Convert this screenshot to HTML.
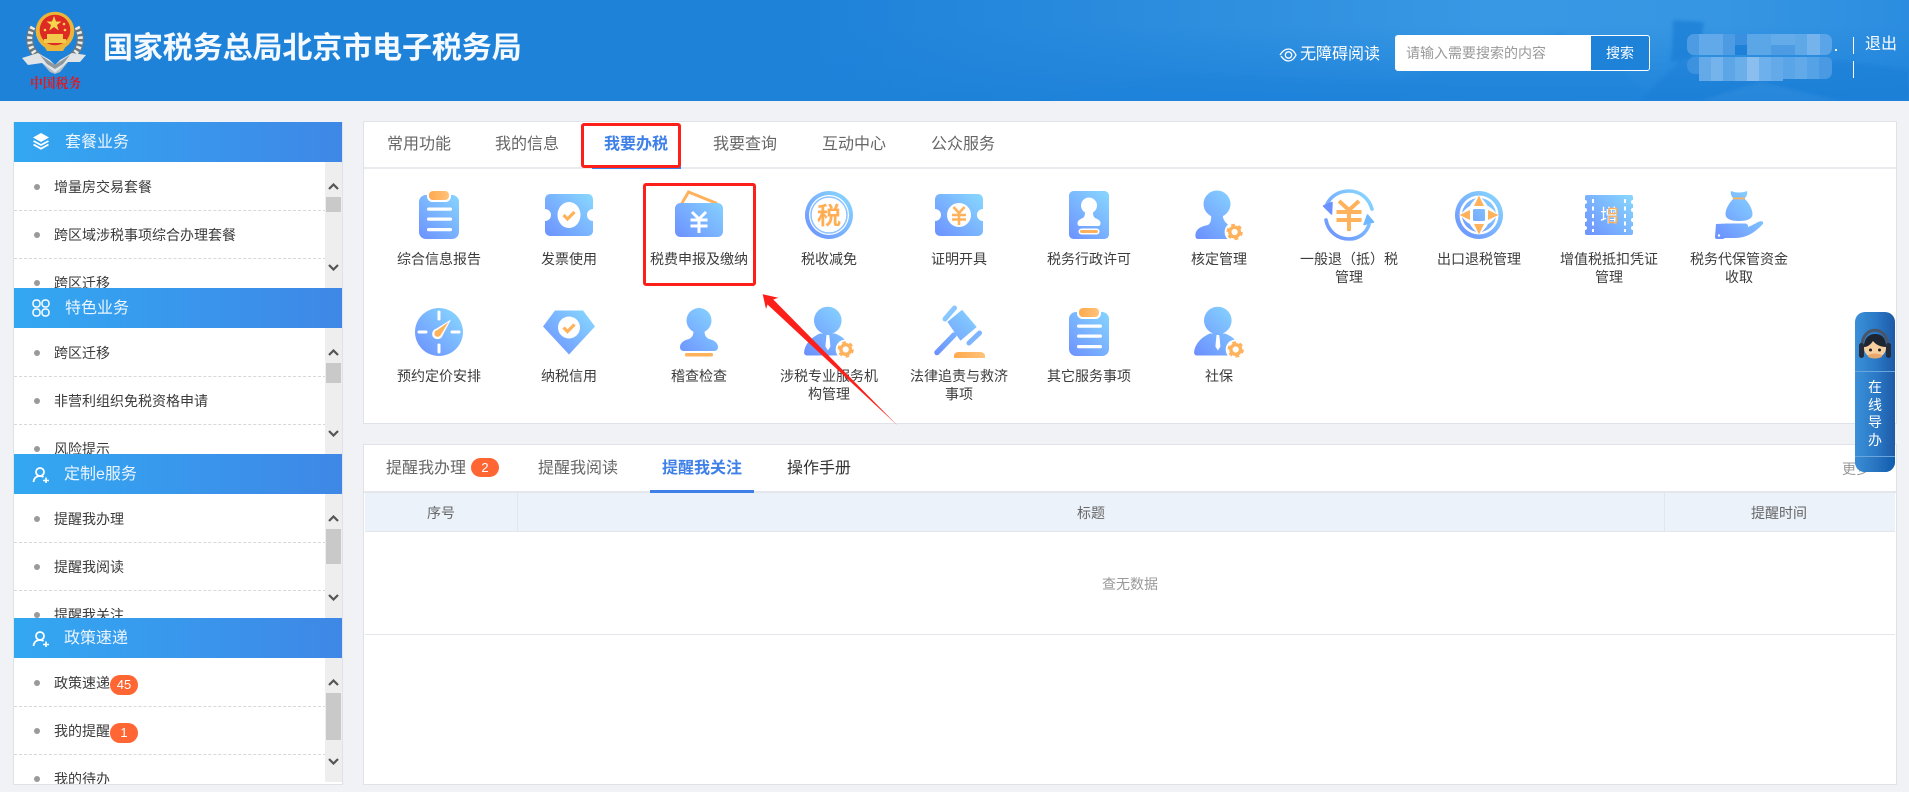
<!DOCTYPE html>
<html lang="zh-CN">
<head>
<meta charset="utf-8">
<title>国家税务总局北京市电子税务局</title>
<style>
*{box-sizing:border-box;margin:0;padding:0}
html,body{width:1909px;height:792px;overflow:hidden;background:#f0f2f5;font-family:"Liberation Sans","Noto Sans CJK SC",sans-serif;color:#333}
.a{position:absolute}
#hd{left:0;top:0;width:1909px;height:101px;background:linear-gradient(180deg,rgba(30,130,217,0) 25%,rgba(30,130,217,.95) 100%),linear-gradient(90deg,#1e82d9 0,#1e82d9 42%,#2a8bdd 58%,#3898e4 78%,#3696e3 90%,#2c8de0 100%);overflow:hidden}
.t{position:absolute;white-space:nowrap}
.sec{position:absolute;left:13px;width:330px;background:#fff;overflow:hidden;border-left:1px solid #dfe2e6;border-right:1px solid #dfe2e6}
.sh{position:absolute;left:0;top:0;width:328px;height:40px;background:linear-gradient(90deg,#33a8f2,#3e87e6);color:#eaf5ff;font-size:16px;line-height:41px}
.sh span{position:absolute;left:51px}
.sh svg{position:absolute;left:18px;top:11px}
.line{position:absolute;left:0;width:312px;border-top:1px dashed #d8d8d8}
.it{position:absolute;left:40px;font-size:14px;line-height:20px;color:#3a3a3a;white-space:nowrap}
.dot{position:absolute;left:20px;width:6px;height:6px;border-radius:50%;background:#9a9a9a}
.sb{position:absolute;left:311px;top:40px;width:17px;background:#eee}
.th{position:absolute;left:1px;width:15px;background:#c9c9c9}
.sb svg{position:absolute;left:3px}
.bd{position:absolute;height:20px;width:28px;border-radius:10px;background:#ff6633;color:#fff;font-size:13px;line-height:20px;text-align:center}
.pn{position:absolute;background:#fff;border:1px solid #dfe2e6}
.tb{position:absolute;font-size:16px;line-height:22px;color:#666;white-space:nowrap}
.ic{position:absolute;width:60px;height:60px;overflow:visible}
.lb{position:absolute;width:100px;font-size:14px;line-height:18px;text-align:center;color:#3c3c3c}
.rb{position:absolute;border:3px solid #fc1f1a;border-radius:3px}
</style>
</head>
<body>
<svg width="0" height="0" style="position:absolute">
<defs>
<linearGradient id="g" gradientUnits="userSpaceOnUse" x1="8" y1="54" x2="52" y2="8"><stop offset="0" stop-color="#6c90ff"/><stop offset="1" stop-color="#88d8ff"/></linearGradient>
<linearGradient id="o" x1="0" y1="0" x2="1" y2="0"><stop offset="0" stop-color="#ffa94d"/><stop offset="1" stop-color="#ffc27a"/></linearGradient>
<filter id="bl"><feGaussianBlur stdDeviation="1.500"/></filter>
<g id="gear"><circle r="10" fill="#fff"/><circle r="4.800" fill="none" stroke="#ffb25c" stroke-width="3.400"/><circle r="7.200" fill="none" stroke="#ffb25c" stroke-width="2" stroke-dasharray="3.800 3.740"/></g>
<path id="ticket" d="M11 9H49a5 5 0 0 1 5 5V24a6 6 0 0 0 0 12V46a5 5 0 0 1-5 5H11a5 5 0 0 1-5-5V36a6 6 0 0 0 0-12V14a5 5 0 0 1 5-5Z" fill="url(#g)"/>
<g id="clip"><rect x="10" y="10" width="40" height="44" rx="7" fill="url(#g)"/><rect x="18" y="4.500" width="24" height="12.500" rx="5.500" fill="#fff"/><rect x="20" y="6" width="20" height="9" rx="4" fill="url(#o)"/><rect x="18" y="22.500" width="25" height="3.200" rx="1.600" fill="#fff"/><rect x="18" y="32.500" width="25" height="3.200" rx="1.600" fill="#fff"/><rect x="18" y="43" width="25" height="3.200" rx="1.600" fill="#fff"/></g>
<g id="person"><circle cx="28.800" cy="18.500" r="13.800" fill="url(#g)"/><path d="M8 53.500a3 3 0 0 1-3-3C6 41 13 35 21 31.500H36C44 34.500 50 40 52 50V53.500Z" fill="url(#g)"/><path d="M27.500 33h2.600l.5 3 .8 8.500-2.500 4-2.500-4 .8-8.500Z" fill="#fff"/><use href="#gear" x="46.700" y="47.500"/></g>
</defs>
</svg>

<div id="hd" class="a">
  <svg class="a" style="left:0;top:0" width="1909" height="101" viewBox="0 0 1909 101">
    <g filter="url(#bl)">
      <path d="M1040 101 L1180 74 L1290 80 L1400 82 L1490 52 L1560 33 L1610 55 L1650 101Z" fill="#1e82d9" opacity=".35"/>
      <path d="M1672 50 L1673 20 L1704 22 L1700 48 L1690 60 L1670 62Z" fill="#1e7ed6" opacity=".75"/>
      <path d="M1640 101 L1680 60 L1740 80 L1840 60 L1909 70 L1909 101Z" fill="#1c7dd5" opacity=".45"/>
      <path d="M1760 82 L1840 101 L1700 101Z" fill="#3a95e0" opacity=".35"/>
    </g>
  </svg>
  <!-- emblem -->
  <svg class="a" style="left:20px;top:10px" width="68" height="84" viewBox="0 0 68 84">
    <path d="M13 17C7 28 9 40 20 48" fill="none" stroke="#6d777b" stroke-width="7"/>
    <path d="M13 17C7 28 9 40 20 48" fill="none" stroke="#eceeee" stroke-width="5" stroke-dasharray="2.500 2.500"/>
    <path d="M57 17C63 28 61 40 50 48" fill="none" stroke="#6d777b" stroke-width="7"/>
    <path d="M57 17C63 28 61 40 50 48" fill="none" stroke="#eceeee" stroke-width="5" stroke-dasharray="2.500 2.500"/>
    <circle cx="35" cy="21" r="19.300" fill="#ecb538"/>
    <circle cx="35" cy="20" r="15.300" fill="#de2a24"/>
    <polygon points="34,6 36,11.500 41.500,11.500 37,15 38.700,20.500 34,17 29.300,20.500 31,15 26.500,11.500 32,11.500" fill="#f7d64e"/>
    <circle cx="44" cy="14" r="1.300" fill="#f7d64e"/><circle cx="25" cy="20" r="1.300" fill="#f7d64e"/><circle cx="45" cy="20" r="1.300" fill="#f7d64e"/>
    <rect x="27" y="24" width="16" height="5" fill="#f2cb4c"/>
    <rect x="24" y="29" width="22" height="4" fill="#f2cb4c"/>
    <path d="M24 36H46L43 41H27Z" fill="#ecb538"/>
    <path d="M2 48L18 43L30 50L35 55L40 50L52 43L66 45L60 52L48 52L40 59L35 63L30 59L22 53L8 55Z" fill="#e0e4e6"/>
    <path d="M20 45L35 55L50 45L43 54L35 59L27 54Z" fill="#8e979c"/>
    <path d="M22 53L35 63L48 52L40 62L35 64L30 62Z" fill="#b9c0c3"/>
    <text x="10" y="78" font-family="'Noto Serif CJK SC',serif" font-size="13.500" font-weight="700" fill="#e4161c" textLength="51" lengthAdjust="spacingAndGlyphs">中国税务</text>
  </svg>
  <div class="t" style="left:103px;top:30px;font-size:30px;line-height:38px;font-weight:700;color:#f4faff;letter-spacing:-.1px">国家税务总局北京市电子税务局</div>
  <svg class="a" style="left:1279px;top:47px" width="18" height="16" viewBox="0 0 18 16"><path d="M1 8C4 3 7 2 9.500 2S15 4 17 8C15 12 12 14 9.500 14S4 12 2 9" fill="none" stroke="#fff" stroke-width="1.300"/><circle cx="9.500" cy="8" r="3.200" fill="none" stroke="#fff" stroke-width="1.300"/></svg>
  <div class="t" style="left:1300px;top:44px;font-size:16px;line-height:22px;color:#fff">无障碍阅读</div>
  <div class="a" style="left:1395px;top:35px;width:255px;height:36px;background:#fff;border:1px solid #fff;border-radius:3px;overflow:hidden">
    <div class="t" style="left:10px;top:7px;font-size:14px;line-height:20px;color:#999">请输入需要搜索的内容</div>
    <div class="a" style="left:195px;top:0;width:58px;height:34px;background:#1e82d9;color:#fff;font-size:14px;line-height:34px;text-align:center">搜索</div>
  </div>
  <!-- blurred name -->
  <svg class="a" style="left:1687px;top:34px" width="146" height="48" viewBox="0 0 146 48">
    <defs><clipPath id="m1"><rect x="0" y="0" width="145" height="21" rx="7"/></clipPath><clipPath id="m2"><path d="M8 23H140a5 5 0 0 1 5 5V38a7 7 0 0 1-7 7H96V47H12V40H8a8 8 0 0 1-8-8V31a8 8 0 0 1 8-8Z"/></clipPath></defs>
    <g clip-path="url(#m1)">
      <rect x="0" y="0" width="12" height="21" fill="#4d9ce3"/><rect x="12" y="0" width="24" height="21" fill="#62a9e9"/><rect x="36" y="0" width="12" height="21" fill="#4c9be3"/><rect x="48" y="0" width="12" height="11" fill="#3a90df"/><rect x="48" y="11" width="12" height="10" fill="#1f80d8"/><rect x="60" y="0" width="24" height="21" fill="#5aa6e7"/><rect x="84" y="0" width="24" height="11" fill="#63abe9"/><rect x="84" y="11" width="24" height="10" fill="#4d9ce3"/><rect x="108" y="0" width="12" height="21" fill="#5ea8e8"/><rect x="120" y="0" width="13" height="21" fill="#74b3ec"/><rect x="133" y="0" width="12" height="21" fill="#5aa5e7"/>
    </g>
    <g clip-path="url(#m2)">
      <rect x="0" y="23" width="12" height="24" fill="#3d92df"/><rect x="12" y="23" width="12" height="24" fill="#64aae9"/><rect x="24" y="23" width="12" height="24" fill="#74b3ec"/><rect x="36" y="23" width="12" height="24" fill="#5ca6e7"/><rect x="48" y="23" width="12" height="24" fill="#6bafea"/><rect x="60" y="23" width="12" height="24" fill="#8abeef"/><rect x="72" y="23" width="12" height="24" fill="#6db0eb"/><rect x="84" y="23" width="12" height="24" fill="#64aae9"/><rect x="96" y="23" width="12" height="24" fill="#5aa5e7"/><rect x="108" y="23" width="12" height="24" fill="#62a9e9"/><rect x="120" y="23" width="12" height="24" fill="#56a2e6"/><rect x="132" y="23" width="13" height="24" fill="#4a9ae3"/>
    </g>
  </svg>
  <div class="a" style="left:1835px;top:49px;width:2px;height:2px;background:#fff"></div>
  <div class="a" style="left:1853px;top:37px;width:1px;height:17px;background:#fff"></div>
  <div class="a" style="left:1853px;top:61px;width:1px;height:17px;background:#fff"></div>
  <div class="t" style="left:1865px;top:34px;font-size:16px;line-height:22px;color:#fff">退出</div>
</div>

<!-- sidebar -->
<div class="sec" style="top:122px;height:166px">
  <div class="sh"><svg width="18" height="18" viewBox="0 0 18 18" style="top:10px"><path d="M9 1L17 5.500L9 10L1 5.500Z" fill="#fff"/><path d="M1.500 9L9 13L16.500 9M1.500 12.500L9 16.700L16.500 12.500" fill="none" stroke="#fff" stroke-width="1.800"/></svg><span>套餐业务</span></div>
  <div class="dot" style="top:62px"></div><div class="it" style="top:55px">增量房交易套餐</div><div class="line" style="top:88px"></div>
  <div class="dot" style="top:110px"></div><div class="it" style="top:103px">跨区域涉税事项综合办理套餐</div><div class="line" style="top:136px"></div>
  <div class="dot" style="top:158px"></div><div class="it" style="top:151px">跨区迁移</div>
  <div class="sb" style="height:126px"><svg width="11" height="7" viewBox="0 0 11 7" style="top:21px"><path d="M1 6L5.500 1.500L10 6" fill="none" stroke="#555" stroke-width="2.200"/></svg><div class="th" style="top:35px;height:15px"></div><svg width="11" height="7" viewBox="0 0 11 7" style="top:102px"><path d="M1 1L5.500 5.500L10 1" fill="none" stroke="#555" stroke-width="2.200"/></svg></div>
</div>
<div class="sec" style="top:288px;height:166px">
  <div class="sh"><svg width="18" height="18" viewBox="0 0 18 18" style="top:11px"><g fill="none" stroke="#fff" stroke-width="1.500"><rect x="1" y="1" width="7" height="7" rx="3"/><rect x="10" y="1" width="7" height="7" rx="3"/><rect x="1" y="10" width="7" height="7" rx="3"/><rect x="10" y="10" width="7" height="7" rx="3"/></g></svg><span>特色业务</span></div>
  <div class="dot" style="top:62px"></div><div class="it" style="top:55px">跨区迁移</div><div class="line" style="top:88px"></div>
  <div class="dot" style="top:110px"></div><div class="it" style="top:103px">非营利组织免税资格申请</div><div class="line" style="top:136px"></div>
  <div class="dot" style="top:158px"></div><div class="it" style="top:151px">风险提示</div>
  <div class="sb" style="height:126px"><svg width="11" height="7" viewBox="0 0 11 7" style="top:21px"><path d="M1 6L5.500 1.500L10 6" fill="none" stroke="#555" stroke-width="2.200"/></svg><div class="th" style="top:35px;height:20px"></div><svg width="11" height="7" viewBox="0 0 11 7" style="top:102px"><path d="M1 1L5.500 5.500L10 1" fill="none" stroke="#555" stroke-width="2.200"/></svg></div>
</div>
<div class="sec" style="top:454px;height:164px">
  <div class="sh"><svg width="18" height="18" viewBox="0 0 18 18" style="top:12px"><circle cx="8" cy="6" r="4" fill="none" stroke="#fff" stroke-width="1.800"/><path d="M1.500 16C2 11.500 5 10 8 10C9.500 10 10.500 10.300 11.500 11" fill="none" stroke="#fff" stroke-width="1.800"/><path d="M11 14.500H17M14 11.500V17" stroke="#fff" stroke-width="1.600"/></svg><span style="left:50px">定制e服务</span></div>
  <div class="dot" style="top:62px"></div><div class="it" style="top:55px">提醒我办理</div><div class="line" style="top:88px"></div>
  <div class="dot" style="top:110px"></div><div class="it" style="top:103px">提醒我阅读</div><div class="line" style="top:136px"></div>
  <div class="dot" style="top:158px"></div><div class="it" style="top:151px">提醒我关注</div>
  <div class="sb" style="height:124px"><svg width="11" height="7" viewBox="0 0 11 7" style="top:21px"><path d="M1 6L5.500 1.500L10 6" fill="none" stroke="#555" stroke-width="2.200"/></svg><div class="th" style="top:35px;height:35px"></div><svg width="11" height="7" viewBox="0 0 11 7" style="top:100px"><path d="M1 1L5.500 5.500L10 1" fill="none" stroke="#555" stroke-width="2.200"/></svg></div>
</div>
<div class="sec" style="top:618px;height:167px;border-bottom:1px solid #dfe2e6">
  <div class="sh"><svg width="18" height="18" viewBox="0 0 18 18" style="top:12px"><circle cx="8" cy="6" r="4" fill="none" stroke="#fff" stroke-width="1.800"/><path d="M1.500 16C2 11.500 5 10 8 10C9.500 10 10.500 10.300 11.500 11" fill="none" stroke="#fff" stroke-width="1.800"/><path d="M11 14.500H17M14 11.500V17" stroke="#fff" stroke-width="1.600"/></svg><span style="left:50px">政策速递</span></div>
  <div class="dot" style="top:62px"></div><div class="it" style="top:55px">政策速递</div><div class="bd" style="left:96px;top:57px">45</div><div class="line" style="top:88px"></div>
  <div class="dot" style="top:110px"></div><div class="it" style="top:103px">我的提醒</div><div class="bd" style="left:96px;top:105px">1</div><div class="line" style="top:136px"></div>
  <div class="dot" style="top:158px"></div><div class="it" style="top:151px">我的待办</div>
  <div class="sb" style="height:124px"><svg width="11" height="7" viewBox="0 0 11 7" style="top:21px"><path d="M1 6L5.500 1.500L10 6" fill="none" stroke="#555" stroke-width="2.200"/></svg><div class="th" style="top:35px;height:47px"></div><svg width="11" height="7" viewBox="0 0 11 7" style="top:100px"><path d="M1 1L5.500 5.500L10 1" fill="none" stroke="#555" stroke-width="2.200"/></svg></div>
</div>

<!-- top panel -->
<div class="pn" style="left:363px;top:121px;width:1534px;height:303px"></div>
<div class="a" style="left:364px;top:167px;width:1532px;height:2px;background:#e8eaee"></div>
<div class="tb" style="left:387px;top:134px">常用功能</div>
<div class="tb" style="left:495px;top:134px">我的信息</div>
<div class="tb" style="left:604px;top:134px;color:#3f80e8;font-weight:700">我要办税</div>
<div class="tb" style="left:713px;top:134px">我要查询</div>
<div class="tb" style="left:822px;top:134px">互动中心</div>
<div class="tb" style="left:931px;top:134px">公众服务</div>
<div class="a" style="left:592px;top:166px;width:89px;height:3px;background:#3f80e8"></div>
<div class="rb" style="left:581px;top:123px;width:100px;height:45px"></div>

<!-- row 1 icons -->
<svg class="ic" style="left:409px;top:185px" viewBox="0 0 60 60"><use href="#clip"/></svg>
<svg class="ic" style="left:539px;top:185px" viewBox="0 0 60 60"><use href="#ticket"/><ellipse cx="30" cy="30" rx="11.500" ry="13" fill="#fff"/><path d="M24.500 30L28.500 34L35.500 27" fill="none" stroke="#ffb25c" stroke-width="3.200"/></svg>
<svg class="ic" style="left:669px;top:185px" viewBox="0 0 60 60"><path d="M12.500 19L19.500 7L48 18.500" fill="none" stroke="#ffb25c" stroke-width="3"/><rect x="6" y="18" width="48" height="34" rx="5.500" fill="url(#g)"/><path d="M23 27L30 34L37 27M21.500 35H38.500M21.500 41H38.500M30 34V48" fill="none" stroke="#fff" stroke-width="3"/></svg>
<svg class="ic" style="left:799px;top:185px" viewBox="0 0 60 60"><circle cx="30" cy="30" r="24" fill="url(#g)"/><circle cx="30" cy="30" r="20" fill="#fff"/><circle cx="30" cy="30" r="18" fill="none" stroke="#8cc2ff" stroke-width="1.500"/><text x="30" y="39" text-anchor="middle" font-size="24" font-weight="700" fill="#ffae55">税</text></svg>
<svg class="ic" style="left:929px;top:185px" viewBox="0 0 60 60"><use href="#ticket"/><circle cx="30" cy="30" r="12" fill="#fff"/><path d="M24.500 22L30 28L35.500 22M23 30H37M23 34.500H37M30 28V40" fill="none" stroke="#ffb25c" stroke-width="2.600"/></svg>
<svg class="ic" style="left:1059px;top:185px" viewBox="0 0 60 60"><rect x="10" y="6" width="40" height="48" rx="4.500" fill="url(#g)"/><circle cx="30" cy="20.500" r="8" fill="#fff"/><path d="M26 25C26 30 26 32 23 33.500C20 34.500 18.500 36 18.500 38.500C18.500 40 19.500 41 21 41H39C40.500 41 41.500 40 41.500 38.500C41.500 36 40 34.500 37 33.500C34 32 34 30 34 25Z" fill="#fff"/><rect x="19.500" y="43.500" width="21" height="6" rx="3" fill="#fff"/><rect x="21" y="45" width="18" height="3" rx="1.500" fill="#ffb25c"/></svg>
<svg class="ic" style="left:1189px;top:185px" viewBox="0 0 60 60"><circle cx="28" cy="19" r="13.500" fill="url(#g)"/><path d="M9 54C6 54 6 50 7 47C9 42.500 14 41 19 40C22 38 22.500 34 22 29H34C33.500 33 35 37 40 40L42 54Z" fill="url(#g)"/><use href="#gear" x="45.600" y="47"/></svg>
<svg class="ic" style="left:1319px;top:185px" viewBox="0 0 60 60"><path d="M8 19C12 11 20 6 30 6C42 6 50 14 53 24" fill="none" stroke="url(#g)" stroke-width="3.600" stroke-linecap="round"/><path d="M4.500 21L13 17.500L12.500 29Z" fill="#6c90ff" stroke="#6c90ff" stroke-linejoin="round" stroke-width="1.500"/><path d="M7 35C9 46 18 54 30 54C40 54 47 48 50 40" fill="none" stroke="url(#g)" stroke-width="3.600" stroke-linecap="round"/><path d="M54.500 37L45 39.500L48.500 30Z" fill="#6fb8ff" stroke="#6fb8ff" stroke-linejoin="round" stroke-width="1.500"/><path d="M20 16L30 25L40 16M17.500 27H42.500M17.500 35H42.500M30 25V46" fill="none" stroke="#ffb25c" stroke-width="4"/></svg>
<svg class="ic" style="left:1449px;top:185px" viewBox="0 0 60 60"><circle cx="30" cy="30" r="24" fill="url(#g)"/><circle cx="30" cy="30" r="19.500" fill="#fff"/><circle cx="30" cy="30" r="17" fill="url(#g)"/><path d="M30 11C37 17 39 22 39 21C43 23 45 26 49 30C45 34 43 37 39 39C37 43 34 46 30 49C26 46 23 43 21 39C17 37 15 34 11 30C15 26 17 23 21 21C23 17 26 14 30 11Z" fill="#fff"/><rect x="24" y="24" width="12" height="12" rx="1.500" fill="url(#g)"/><path d="M30 10.500L35 21H25ZM30 49.500L35 39H25ZM10.500 30L21 25V35ZM49.500 30L39 25V35Z" fill="#ffb25c"/></svg>
<svg class="ic" style="left:1579px;top:185px" viewBox="0 0 60 60"><path d="M8 10H52a2 2 0 0 1 2 2V15a2 2 0 0 0 0 4V23a2 2 0 0 0 0 4V33a2 2 0 0 0 0 4V41a2 2 0 0 0 0 4V48a2 2 0 0 1-2 2H8a2 2 0 0 1-2-2V45a2 2 0 0 0 0-4V37a2 2 0 0 0 0-4V27a2 2 0 0 0 0-4V19a2 2 0 0 0 0-4V12a2 2 0 0 1 2-2Z" fill="url(#g)"/><path d="M14 14V47M46 14V47" stroke="#fff" stroke-width="2" stroke-dasharray="4 3.500"/><text x="30" y="37" text-anchor="middle" font-size="18" fill="#fff">增</text><rect x="30" y="23.500" width="7.500" height="5" fill="none" stroke="#ffb25c" stroke-width="1.500"/><rect x="30" y="31.500" width="7.500" height="6" fill="none" stroke="#ffb25c" stroke-width="1.500"/></svg>
<svg class="ic" style="left:1709px;top:185px" viewBox="0 0 60 60"><path d="M22 6C26 8 34 8 38 6C39 9 37 12 35.500 13.500C40 18 43.500 24 43.500 29C43.500 34 38 36 30 36C22 36 16.500 34 16.500 29C16.500 24 20 18 24.500 13.500C23 12 21 9 22 6Z" fill="url(#g)"/><rect x="24" y="12.500" width="12" height="1.800" fill="#ffb25c"/><path d="M7 39L18 38.500H36C40 38.500 40 44 36 44H29C36 44 42 41 49 37C53 35 56 37 53 40C46 47 38 53 26 53H16L14 54H8C6.500 54 6 53 6 52Z" fill="url(#g)"/><circle cx="10" cy="50.500" r="1.200" fill="#fff"/></svg>

<!-- row 2 icons -->
<svg class="ic" style="left:409px;top:302px" viewBox="0 0 60 60"><circle cx="30" cy="30" r="24" fill="url(#g)"/><path d="M30 10V17M30 43V50M10 30H17M43 30H50" stroke="#fff" stroke-width="3" stroke-linecap="round"/><path d="M42 17.500L32.500 35.500C30 38 25 37.500 23.500 34C22.500 30 24.500 27.500 27.500 26.500Z" fill="#fff"/><path d="M39.500 20L31.500 33.500C29.500 35.500 26.500 35 25.500 33C25 30.500 26 28.500 28.500 28Z" fill="#ffb25c"/></svg>
<svg class="ic" style="left:539px;top:302px" viewBox="0 0 60 60"><path d="M16 8.500H44L56 24.500L30 52.500L4 24.500Z" fill="url(#g)"/><circle cx="30" cy="25.500" r="11" fill="#fff"/><path d="M24.500 25.500L28.500 29.500L35.500 22.500" fill="none" stroke="#ffb25c" stroke-width="3.200"/></svg>
<svg class="ic" style="left:669px;top:302px" viewBox="0 0 60 60"><circle cx="30" cy="18.500" r="12.500" fill="url(#g)"/><path d="M24 26C25 32 24 35 20 37C15 38 11 41 11 45C11 48 13 49 15 49H45C47 49 49 48 49 45C49 41 45 38 40 37C36 35 35 32 36 26Z" fill="url(#g)"/><rect x="16" y="51" width="28" height="3.500" rx="1.500" fill="#ffb25c"/></svg>
<svg class="ic" style="left:799px;top:302px" viewBox="0 0 60 60"><use href="#person"/></svg>
<svg class="ic" style="left:929px;top:302px" viewBox="0 0 60 60"><path d="M19 20L33 8.500L47 25L31.500 38Z" fill="url(#g)" stroke="url(#g)" stroke-linejoin="round"/><path d="M25 33L8 50.500" stroke="url(#g)" stroke-width="5.500" stroke-linecap="round"/><path d="M16 17L25.500 6" stroke="#88c8ff" stroke-width="5" stroke-linecap="round"/><path d="M40 41L50.500 31" stroke="#7fb4ff" stroke-width="5" stroke-linecap="round"/><path d="M25 56V54C25 51.500 27 50 29.500 50H51C53.500 50 56 51.500 56 54V56Z" fill="url(#o)"/></svg>
<svg class="ic" style="left:1059px;top:302px" viewBox="0 0 60 60"><use href="#clip"/></svg>
<svg class="ic" style="left:1189px;top:302px" viewBox="0 0 60 60"><use href="#person"/></svg>

<!-- labels -->
<div class="lb" style="left:389px;top:250px">综合信息报告</div>
<div class="lb" style="left:519px;top:250px">发票使用</div>
<div class="lb" style="left:649px;top:250px">税费申报及缴纳</div>
<div class="lb" style="left:779px;top:250px">税收减免</div>
<div class="lb" style="left:909px;top:250px">证明开具</div>
<div class="lb" style="left:1039px;top:250px">税务行政许可</div>
<div class="lb" style="left:1169px;top:250px">核定管理</div>
<div class="lb" style="left:1299px;top:250px">一般退（抵）税<br>管理</div>
<div class="lb" style="left:1429px;top:250px">出口退税管理</div>
<div class="lb" style="left:1559px;top:250px">增值税抵扣凭证<br>管理</div>
<div class="lb" style="left:1689px;top:250px">税务代保管资金<br>收取</div>
<div class="lb" style="left:389px;top:367px">预约定价安排</div>
<div class="lb" style="left:519px;top:367px">纳税信用</div>
<div class="lb" style="left:649px;top:367px">稽查检查</div>
<div class="lb" style="left:779px;top:367px">涉税专业服务机<br>构管理</div>
<div class="lb" style="left:909px;top:367px">法律追责与救济<br>事项</div>
<div class="lb" style="left:1039px;top:367px">其它服务事项</div>
<div class="lb" style="left:1169px;top:367px">社保</div>

<div class="rb" style="left:643px;top:183px;width:113px;height:103px"></div>
<svg class="a" style="left:0;top:0;pointer-events:none" width="1909" height="792"><polygon points="762.700,294.300 778.300,297.700 773.300,299.500 897.700,425.700 767.500,304.500 766,309" fill="#fc1f1a"/></svg>

<!-- bottom panel -->
<div class="pn" style="left:363px;top:444px;width:1534px;height:341px"></div>
<div class="a" style="left:364px;top:491px;width:1532px;height:2px;background:#e3e6ea"></div>
<div class="tb" style="left:386px;top:458px">提醒我办理</div>
<div class="bd" style="left:471px;top:458px;width:28px;height:19px;line-height:19px">2</div>
<div class="tb" style="left:538px;top:458px">提醒我阅读</div>
<div class="tb" style="left:662px;top:458px;color:#3f80e8;font-weight:700">提醒我关注</div>
<div class="tb" style="left:787px;top:458px;color:#333">操作手册</div>
<div class="a" style="left:650px;top:490px;width:104px;height:3px;background:#3f80e8"></div>
<div class="t" style="left:1842px;top:459px;font-size:14px;line-height:20px;color:#999">更多</div>
<div class="a" style="left:365px;top:493px;width:1530px;height:39px;background:#ebf2fa;border-bottom:1px solid #e3e6ea"></div>
<div class="a" style="left:517px;top:493px;width:1px;height:38px;background:#e3e6ea"></div>
<div class="a" style="left:1664px;top:493px;width:1px;height:38px;background:#e3e6ea"></div>
<div class="t" style="left:427px;top:503px;font-size:14px;line-height:20px;color:#666">序号</div>
<div class="t" style="left:1077px;top:503px;font-size:14px;line-height:20px;color:#666">标题</div>
<div class="t" style="left:1751px;top:503px;font-size:14px;line-height:20px;color:#666">提醒时间</div>
<div class="t" style="left:1102px;top:574px;font-size:14px;line-height:20px;color:#999">查无数据</div>
<div class="a" style="left:365px;top:634px;width:1530px;height:1px;background:#e3e6ea"></div>

<!-- floating widget -->
<div class="a" style="left:1855px;top:312px;width:40px;height:160px;border-radius:10px;background:linear-gradient(90deg,#3b90d8,#2a78c6 55%,#1d5aa6);overflow:hidden">
  <div class="a" style="left:0;top:59px;width:40px;height:1px;background:#6aa6de"></div>
  <div class="a" style="left:0;top:144px;width:40px;height:1px;background:#6aa6de"></div>
  <div class="a" style="left:0;top:145px;width:40px;height:15px;background:linear-gradient(90deg,#3a8dd6,#2670bd 60%,#0f5cae)"></div>
  <svg class="a" style="left:0;top:14px" width="40" height="38" viewBox="0 0 40 38"><path d="M7 20C7 -1 33 -1 33 20" fill="none" stroke="#4a5568" stroke-width="3"/><ellipse cx="20" cy="22" rx="11" ry="10" fill="#f6cfa0"/><path d="M9 21C9 11 15 8 20 8C27 8 31 12 31 21C26 21 21 19 18 15C16 18 13 21 9 21Z" fill="#1f2530"/><circle cx="15.500" cy="24" r="1.500" fill="#222"/><circle cx="24.500" cy="24" r="1.500" fill="#222"/><ellipse cx="20" cy="30" rx="7" ry="2.500" fill="#e9a86b"/><rect x="4" y="17" width="5" height="15" rx="2.500" fill="#252c3a"/><rect x="31" y="17" width="5" height="15" rx="2.500" fill="#252c3a"/></svg>
  <div class="a" style="left:0;top:67px;width:40px;font-size:14px;line-height:17.500px;color:#fff;text-align:center">在<br>线<br>导<br>办</div>
</div>
</body>
</html>
